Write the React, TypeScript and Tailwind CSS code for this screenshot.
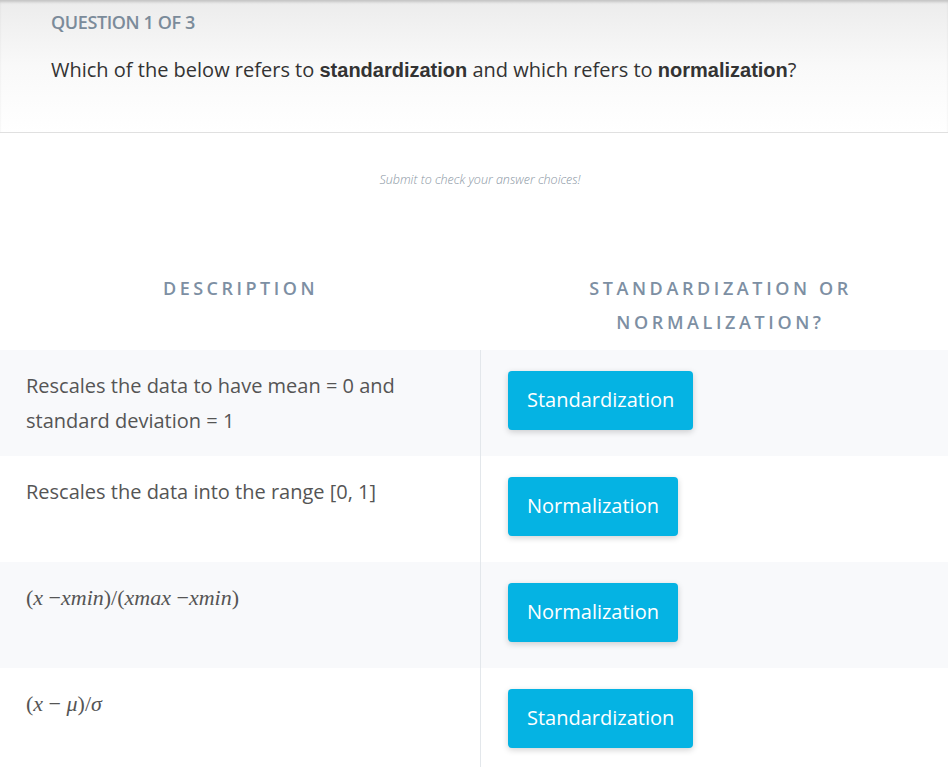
import React from "react";

const rows: { desc: React.ReactNode; answer: string }[] = [
  { desc: "Rescales the data to have mean = 0 and standard deviation = 1", answer: "Standardization" },
  { desc: "Rescales the data into the range [0, 1]", answer: "Normalization" },
  {
    desc: (
      <span className="font-['Liberation_Serif',serif] text-[22px]">
        (<i>x</i> −<i>xmin</i>)/(<i>xmax</i> −<i>xmin</i>)
      </span>
    ),
    answer: "Normalization",
  },
  {
    desc: (
      <span className="font-['Liberation_Serif',serif] text-[22px]">
        (<i>x</i> − <i>μ</i>)/<i>σ</i>
      </span>
    ),
    answer: "Standardization",
  },
];

export default function App() {
  return (
    <div className="min-h-[767px] bg-white font-['Open_Sans',sans-serif] overflow-hidden">
      <div className="h-[133px] border-b border-[#e0e0e0] bg-gradient-to-b from-[#ececec] via-[#f9f9f9] to-white shadow-[inset_0_3px_3px_-1px_rgba(0,0,0,0.18)] px-[51px] pt-[9px]">
        <div className="text-[18px] font-semibold text-[#7b8b9a] tracking-[-0.4px]">QUESTION 1 OF 3</div>
        <div className="mt-[19px] text-[20px] text-[#333]">
          Which of the below refers to{" "}
          <b className="font-['Liberation_Sans',sans-serif] font-bold">standardization</b> and which refers to{" "}
          <b className="font-['Liberation_Sans',sans-serif] font-bold">normalization</b>?
        </div>
      </div>

      <div className="pt-[38px] pl-[12px] text-center text-[12.5px] italic font-light text-[#8a96a3]">
        Submit to check your answer choices!
      </div>

      <div className="mt-[81px] grid grid-cols-[481px_1fr]">
        <div className="text-center text-[18px] font-semibold tracking-[3.5px] leading-[34px] text-[#7d8fa3]">
          DESCRIPTION
        </div>
        <div className="text-center text-[18px] font-semibold tracking-[3.6px] leading-[34px] text-[#7d8fa3] pl-[12px]">
          STANDARDIZATION OR
          <br />
          NORMALIZATION?
        </div>
      </div>

      <div className="mt-[11px]">
        {rows.map((r, i) => (
          <div key={i} className={`grid grid-cols-[481px_1fr] h-[106px] ${i % 2 === 0 ? "bg-[#f8f9fb]" : "bg-white"}`}>
            <div className="border-r border-[#e3e7eb] pl-[26px] pr-[50px] pt-[18px] text-[20px] leading-[35px] text-[#555]">
              {r.desc}
            </div>
            <div className="pl-[27px] pt-[21px]">
              <button className="h-[59px] px-[19px] rounded-[4px] bg-[#05b3e3] text-white text-[20px] shadow-[0_2px_6px_rgba(0,0,0,0.18)]">
                {r.answer}
              </button>
            </div>
          </div>
        ))}
      </div>
    </div>
  );
}
